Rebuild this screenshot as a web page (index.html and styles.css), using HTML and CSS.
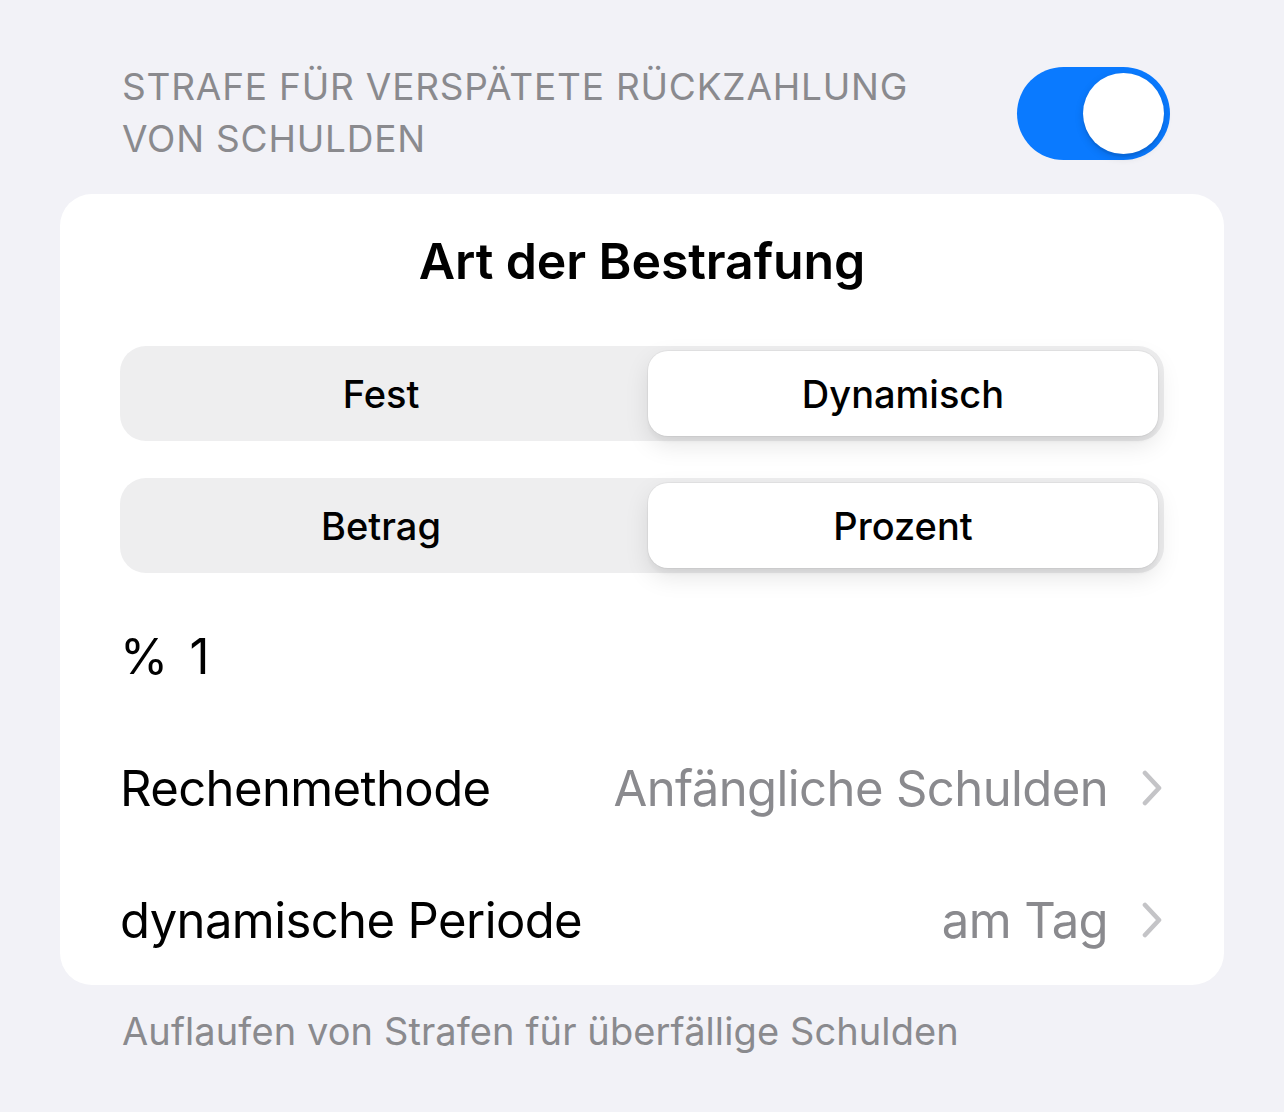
FILE: index.html
```html
<!DOCTYPE html>
<html lang="de">
<head>
<meta charset="utf-8">
<title>Strafe</title>
<link rel="stylesheet" href="styles.css">
</head>
<body>
<div class="page">
  <div class="section-header">
    <div class="header-text">STRAFE FÜR VERSPÄTETE RÜCKZAHLUNG<br>VON SCHULDEN</div>
    <div class="toggle"><div class="knob"></div></div>
  </div>
  <div class="card">
    <div class="title">Art der Bestrafung</div>
    <div class="segmented first">
      <div class="segment">Fest</div>
      <div class="segment selected">Dynamisch</div>
    </div>
    <div class="segmented second">
      <div class="segment">Betrag</div>
      <div class="segment selected">Prozent</div>
    </div>
    <div class="row">
      <span class="label"><span class="unit">%</span>1</span>
    </div>
    <div class="row">
      <span class="label">Rechenmethode</span>
      <span class="value">Anfängliche Schulden
        <svg class="chevron" width="20" height="36" viewBox="0 0 20 36"><path d="M3 3 L17 18 L3 33" fill="none" stroke="#c4c4c7" stroke-width="4.6" stroke-linecap="round" stroke-linejoin="round"/></svg>
      </span>
    </div>
    <div class="row">
      <span class="label">dynamische Periode</span>
      <span class="value">am Tag
        <svg class="chevron" width="20" height="36" viewBox="0 0 20 36"><path d="M3 3 L17 18 L3 33" fill="none" stroke="#c4c4c7" stroke-width="4.6" stroke-linecap="round" stroke-linejoin="round"/></svg>
      </span>
    </div>
  </div>
  <div class="footer">Auflaufen von Strafen für überfällige Schulden</div>
</div>
</body>
</html>
```
FILE: styles.css
```css
html, body {
  margin: 0;
  padding: 0;
  background: #f2f2f7;
  font-family: Inter, "Noto Sans", "Liberation Sans", sans-serif;
  color: #000;
}
.page {
  width: 1284px;
  height: 1112px;
  overflow: hidden;
}
.section-header {
  display: flex;
  align-items: center;
  justify-content: space-between;
  padding: 61px 114px 0 122px;
}
.header-text {
  font-size: 37px;
  line-height: 52px;
  color: #8a8a8e;
  letter-spacing: 0.8px;
}
.toggle {
  width: 153px;
  height: 93px;
  border-radius: 47px;
  background: #0a7aff;
  display: flex;
  align-items: center;
  justify-content: flex-end;
  padding: 0 6px;
  box-sizing: border-box;
}
.knob {
  width: 81px;
  height: 81px;
  border-radius: 50%;
  background: #fff;
  box-shadow: 0 3px 8px rgba(0,0,0,0.15), 0 3px 1px rgba(0,0,0,0.06);
}
.card {
  margin: 29px 60px 0;
  background: #fff;
  border-radius: 32px;
  padding: 0 60px;
  height: 791px;
  box-sizing: border-box;
}
.title {
  padding-top: 37px;
  height: 60px;
  line-height: 60px;
  text-align: center;
  font-size: 50px;
  font-weight: 600;
  letter-spacing: -0.1px;
}
.segmented {
  display: grid;
  grid-template-columns: 1fr 1fr;
  column-gap: 12px;
  height: 95px;
  box-sizing: border-box;
  padding: 5px 6px;
  background: #eeeeef;
  border-radius: 26px;
}
.segmented.first { margin-top: 55px; }
.segmented.second { margin-top: 37px; }
.segment {
  display: flex;
  align-items: center;
  justify-content: center;
  font-size: 38px;
  font-weight: 500;
  border-radius: 20px;
}
.segment.selected {
  background: #fff;
  box-shadow: 0 0 0 1px rgba(0,0,0,0.04), 0 9px 24px rgba(0,0,0,0.10), 0 6px 3px rgba(0,0,0,0.03);
}
.row {
  display: flex;
  align-items: center;
  justify-content: space-between;
  height: 132px;
  font-size: 49px;
  letter-spacing: -0.6px;
}
.segmented.second + .row { margin-top: 17px; }
.unit {
  margin-right: 22px;
}
.value {
  color: #8a8a8e;
  display: flex;
  align-items: center;
}
.chevron {
  margin-left: 34px;
  margin-right: 2px;
}
.footer {
  padding: 20px 0 0 122px;
  line-height: 52px;
  font-size: 38px;
  color: #8a8a8e;
  letter-spacing: 0.1px;
}
```
